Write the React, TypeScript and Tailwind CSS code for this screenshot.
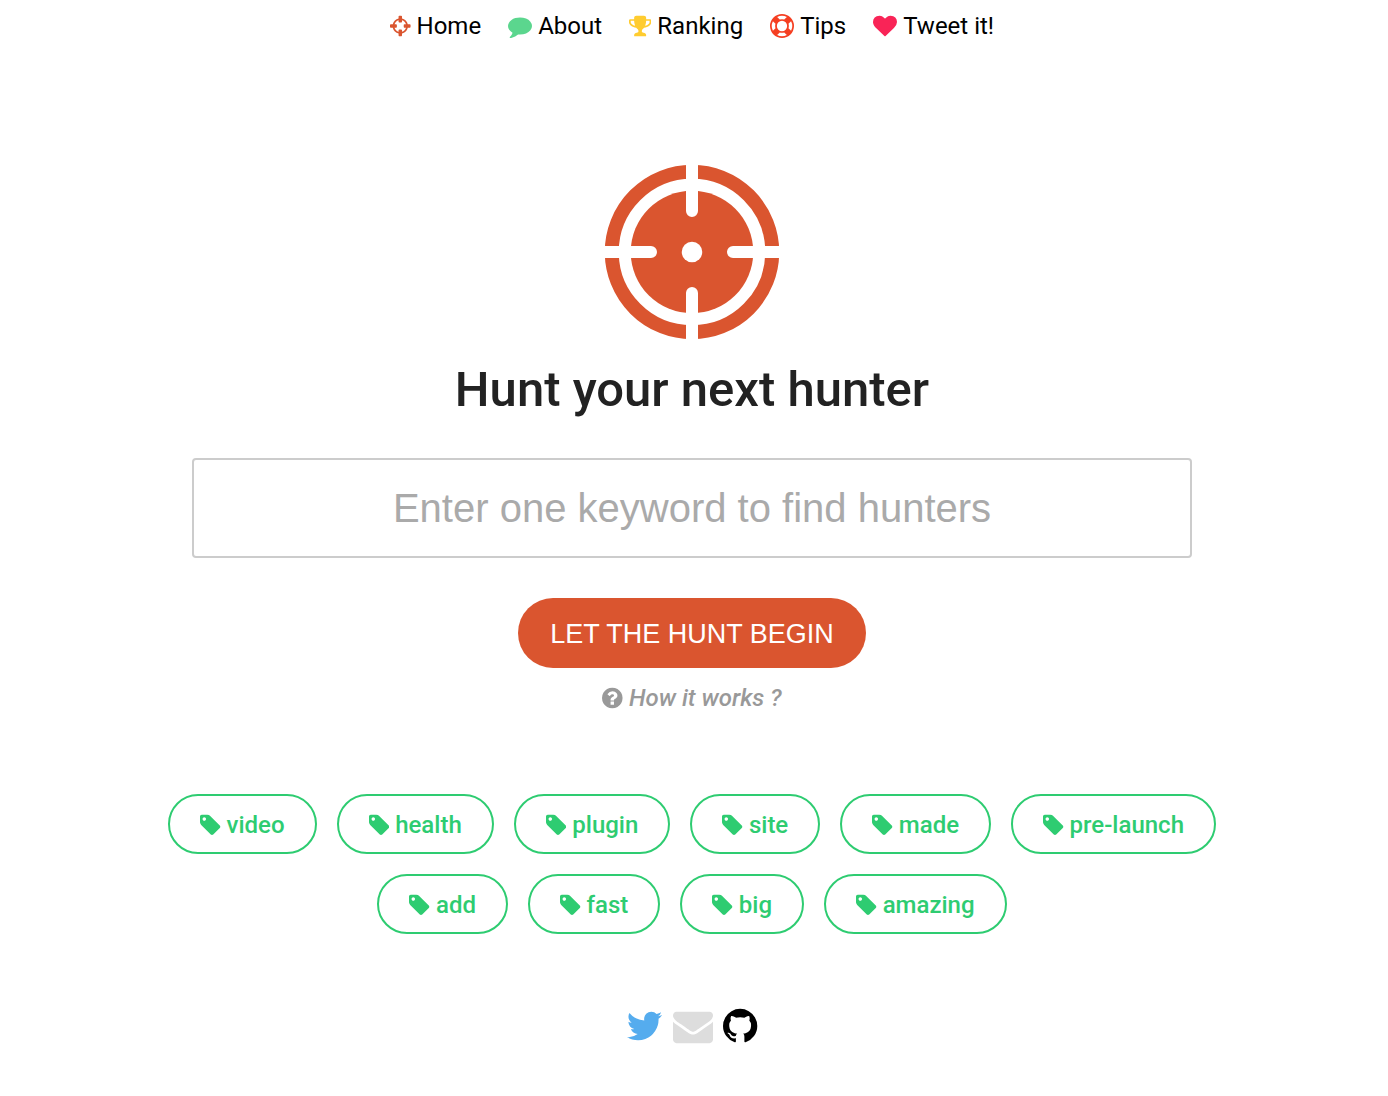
import type { ReactNode } from "react";

type IconName =
    | "crosshairs"
    | "comment"
    | "trophy"
    | "lifeRing"
    | "heart"
    | "question"
    | "tag"
    | "twitter"
    | "envelope"
    | "github";

const icons: Record<IconName, { box: string; path: string }> = {
    crosshairs: {
        box: "128 0 1536 1792",
        path: "M1325 1024h-109q-26 0-45-19t-19-45v-128q0-26 19-45t45-19h109q-32-108-112.5-188.5t-188.5-112.5v109q0 26-19 45t-45 19h-128q-26 0-45-19t-19-45v-109q-108 32-188.5 112.5t-112.5 188.5h109q26 0 45 19t19 45v128q0 26-19 45t-45 19h-109q32 108 112.5 188.5t188.5 112.5v-109q0-26 19-45t45-19h128q26 0 45 19t19 45v109q108-32 188.5-112.5t112.5-188.5zm339-192v128q0 26-19 45t-45 19h-143q-37 161-154.5 278.5t-278.5 154.5v143q0 26-19 45t-45 19h-128q-26 0-45-19t-19-45v-143q-161-37-278.5-154.5t-154.5-278.5h-143q-26 0-45-19t-19-45v-128q0-26 19-45t45-19h143q37-161 154.5-278.5t278.5-154.5v-143q0-26 19-45t45-19h128q26 0 45 19t19 45v143q161 37 278.5 154.5t154.5 278.5h143q26 0 45 19t19 45z",
    },
    comment: {
        box: "0 0 1792 1792",
        path: "M1792 896q0 174-120 321.5t-326 233-450 85.5q-70 0-145-8-198 175-460 242-49 14-114 22-17 2-30.5-9t-17.5-29v-1q-3-4-.5-12t2-10 4.5-9.5l6-9 7-8.5 8-9q7-8 31-34.5t34.5-38 31-39.5 32.5-51 27-59 26-76q-157-89-247.5-220t-90.5-281q0-130 71-248.5t191-204.5 286-136.5 348-50.5q244 0 450 85.5t326 233 120 321.5z",
    },
    trophy: {
        box: "64 0 1664 1792",
        path: "M522 883q-74-162-74-371h-256v96q0 78 94.5 162t235.5 113zm1078-275v-96h-256q0 209-74 371 141-29 235.5-113t94.5-162zm128-128v128q0 71-41.5 143t-112 130-173 97.5-215.5 44.5q-42 54-95 95-38 34-52.5 72.5t-14.5 89.5q0 54 30.5 91t97.5 37q75 0 133.5 45.5t58.5 114.5v64q0 14-9 23t-23 9h-832q-14 0-23-9t-9-23v-64q0-69 58.5-114.5t133.5-45.5q67 0 97.5-37t30.5-91q0-51-14.5-89.5t-52.5-72.5q-53-41-95-95-113-5-215.5-44.5t-173-97.5-112-130-41.5-143v-128q0-40 28-68t68-28h288v-96q0-66 47-113t113-47h576q66 0 113 47t47 113v96h288q40 0 68 28t28 68z",
    },
    lifeRing: {
        box: "0 0 1792 1792",
        path: "M896 0q182 0 348 71t286 191 191 286 71 348-71 348-191 286-286 191-348 71-348-71-286-191-191-286-71-348 71-348 191-286 286-191 348-71zm0 128q-190 0-361 90l194 194q82-28 167-28t167 28l194-194q-171-90-361-90zm-678 1129l194-194q-28-82-28-167t28-167l-194-194q-90 171-90 361t90 361zm678 407q190 0 361-90l-194-194q-82 28-167 28t-167-28l-194 194q171 90 361 90zm0-384q159 0 271.5-112.5t112.5-271.5-112.5-271.5-271.5-112.5-271.5 112.5-112.5 271.5 112.5 271.5 271.5 112.5zm484-217l194 194q90-171 90-361t-90-361l-194 194q28 82 28 167t-28 167z",
    },
    heart: {
        box: "0 0 1792 1792",
        path: "M896 1664q-26 0-44-18l-624-602q-10-8-27.5-26t-55.5-65.5-68-97.5-53.5-121-23.5-138q0-220 127-344t351-124q62 0 126.5 21.5t120 58 95.5 68.5 76 68q36-36 76-68t95.5-68.5 120-58 126.5-21.5q224 0 351 124t127 344q0 221-229 450l-623 600q-18 18-44 18z",
    },
    question: {
        box: "128 0 1536 1792",
        path: "M1024 1376v-192q0-14-9-23t-23-9h-192q-14 0-23 9t-9 23v192q0 14 9 23t23 9h192q14 0 23-9t9-23zm256-672q0-88-55.5-163t-138.5-116-170-41q-243 0-371 213-15 24 8 42l132 100q7 6 19 6 16 0 25-12 53-68 86-92 34-24 86-24 48 0 85.5 26t37.5 59q0 38-20 61t-68 45q-63 28-115.5 86.5t-52.5 125.5v36q0 14 9 23t23 9h192q14 0 23-9t9-23q0-19 21.5-49.5t54.5-49.5q32-18 49-28.5t46-35 44.5-48 28-60.5 12.5-81zm384 192q0 209-103 385.5t-279.5 279.5-385.5 103-385.5-103-279.5-279.5-103-385.5 103-385.5 279.5-279.5 385.5-103 385.5 103 279.5 279.5 103 385.5z",
    },
    tag: {
        box: "128 0 1536 1792",
        path: "M576 448q0-53-37.5-90.5t-90.5-37.5-90.5 37.5-37.5 90.5 37.5 90.5 90.5 37.5 90.5-37.5 37.5-90.5zm1067 576q0 53-37 90l-491 492q-39 37-91 37-53 0-90-37l-715-716q-38-37-64.5-101t-26.5-117v-416q0-52 38-90t90-38h416q53 0 117 26.5t102 64.5l715 714q37 39 37 91z",
    },
    twitter: {
        box: "64 0 1664 1792",
        path: "M1684 408q-67 98-162 167 1 14 1 42 0 130-38 259.5t-115.5 248.5-184.5 210.5-258 146-323 54.5q-271 0-496-145 35 4 78 4 225 0 401-138-105-2-188-64.5t-114-159.5q33 5 61 5 43 0 85-11-112-23-185.5-111.5t-73.5-205.5v-4q68 38 146 41-66-44-105-115t-39-154q0-88 44-163 121 149 294.5 238.5t371.5 99.5q-8-38-8-74 0-134 94.5-228.5t228.5-94.5q140 0 236 102 109-21 205-78-37 115-142 178 93-10 186-50z",
    },
    envelope: {
        box: "0 0 1792 1792",
        path: "M1792 710v794q0 66-47 113t-113 47h-1472q-66 0-113-47t-47-113v-794q44 49 101 87 362 246 497 345 57 42 92.5 65.5t94.5 48 110 24.5h2q51 0 110-24.5t94.5-48 92.5-65.5q170-123 498-345 57-39 100-87zm0-294q0 79-49 151t-122 123q-376 261-468 325-10 7-42.5 31t-54 38.5-52 32.5-57.5 27-50 9h-2q-23 0-50-9t-57.5-27-52-32.5-54-38.5-42.5-31q-91-64-262-182.5t-205-142.5q-62-42-117-115.5t-55-136.5q0-78 41.5-130t118.5-52h1472q65 0 112.5 47t47.5 113z",
    },
    github: {
        box: "128 0 1536 1792",
        path: "M896 128q209 0 385.5 103t279.5 279.5 103 385.5q0 251-146.5 451.5t-378.5 277.5q-27 5-40-7t-13-30q0-3 .5-76.5t.5-134.5q0-97-52-142 57-6 102.5-18t94-39 81-66.5 53-105 20.5-150.5q0-119-79-206 37-91-8-204-28-9-81 11t-92 44l-38 24q-93-26-192-26t-192 26q-16-11-42.5-27t-83.5-38.5-85-13.5q-45 113-8 204-79 87-79 206 0 85 20.5 150t52.5 105 80.5 67 94 39 102.5 18q-39 36-49 103-21 10-45 15t-57 5-65.5-21.5-55.5-62.5q-19-32-48.5-52t-49.5-24l-20-3q-21 0-29 4.5t-5 11.5 9 14 13 12l7 5q22 10 43.5 38t31.5 51l10 23q13 38 44 61.5t67 30 69.5 7 55.5-3.5l23-4q0 38 .5 88.5t.5 54.5q0 18-13 30t-40 7q-232-77-378.5-277.5t-146.5-451.5q0-209 103-385.5t279.5-279.5 385.5-103z",
    },
};

const navLinks: { label: string; icon: IconName; color: string }[] = [
    { label: "Home", icon: "crosshairs", color: "text-[#da552f]" },
    { label: "About", icon: "comment", color: "text-[#5bd68e]" },
    { label: "Ranking", icon: "trophy", color: "text-[#ffcc2f]" },
    { label: "Tips", icon: "lifeRing", color: "text-[#f53f22]" },
    { label: "Tweet it!", icon: "heart", color: "text-[#f92457]" },
];

const tags = ["video", "health", "plugin", "site", "made", "pre-launch", "add", "fast", "big", "amazing"];

const socials: { label: string; icon: IconName; color: string }[] = [
    { label: "Twitter", icon: "twitter", color: "text-[#55acee]" },
    { label: "Email", icon: "envelope", color: "text-[#dddddd]" },
    { label: "GitHub", icon: "github", color: "text-black" },
];

function Icon({ name, className }: { name: IconName; className: string }) {
    return (
        <svg viewBox={icons[name].box} className={`w-auto shrink-0 ${className}`} fill="currentColor" aria-hidden="true">
            <path d={icons[name].path} />
        </svg>
    );
}

function Logo() {
    return (
        <svg viewBox="-88 -88 176 176" className="size-44" aria-hidden="true">
            <circle r="80.25" fill="none" stroke="#da552f" strokeWidth="14" />
            <circle r="61.25" fill="#da552f" />
            <circle r="10.25" fill="#fff" />
            <path
                d="M0-94V-41M0 94V41M-94 0H-41M94 0H41"
                fill="none"
                stroke="#fff"
                strokeWidth="12"
                strokeLinecap="round"
            />
        </svg>
    );
}

function Tag({ children }: { children: ReactNode }) {
    return (
        <a
            href="#"
            className="flex h-15 items-center gap-1.5 rounded-full border-2 border-[#2ecc71] px-7.5 pt-0.5 text-2xl font-medium text-[#2ecc71]"
        >
            <Icon name="tag" className="h-6" />
            {children}
        </a>
    );
}

export default function App() {
    return (
        <div className="flex flex-col items-center bg-white pr-1 pb-12 font-['Roboto',sans-serif]">
            <nav className="flex flex-wrap justify-center gap-x-[27px] pt-2.5">
                {navLinks.map((link) => (
                    <a key={link.label} href="#" className="flex items-center gap-1.5 text-2xl text-black">
                        <Icon name={link.icon} className={`h-6 ${link.color}`} />
                        {link.label}
                    </a>
                ))}
            </nav>

            <main className="flex w-full flex-col items-center px-4 pt-30.5">
                <Logo />
                <h1 className="mt-5 text-center text-[49px] leading-15 font-medium text-[#222222]">
                    Hunt your next hunter
                </h1>
                <form className="mt-9.5 flex w-full flex-col items-center">
                    <input
                        type="text"
                        aria-label="Keyword"
                        placeholder="Enter one keyword to find hunters"
                        className="h-25 w-full max-w-[1000px] rounded-sm border-2 border-[#cccccc] text-center font-['Liberation_Sans',sans-serif] text-[40px] text-[#222222] placeholder:text-[#aaaaaa]"
                    />
                    <button
                        type="button"
                        className="mt-10 h-17.5 rounded-full bg-[#da552f] px-8 pt-0.5 font-['Liberation_Sans',sans-serif] text-[27px] text-white"
                    >
                        LET THE HUNT BEGIN
                    </button>
                </form>
                <a href="#" className="mt-3.5 flex items-center gap-1.5 text-2xl font-medium text-[#999999] italic">
                    <Icon name="question" className="h-6" />
                    How it works ?
                </a>
                <div className="mt-20 flex max-w-[1100px] flex-wrap justify-center gap-5">
                    {tags.map((tag) => (
                        <Tag key={tag}>{tag}</Tag>
                    ))}
                </div>
            </main>

            <footer className="mt-18 flex gap-2.5">
                {socials.map((social) => (
                    <a key={social.label} href="#" aria-label={social.label}>
                        <Icon name={social.icon} className={`h-10 ${social.color}`} />
                    </a>
                ))}
            </footer>
        </div>
    );
}
